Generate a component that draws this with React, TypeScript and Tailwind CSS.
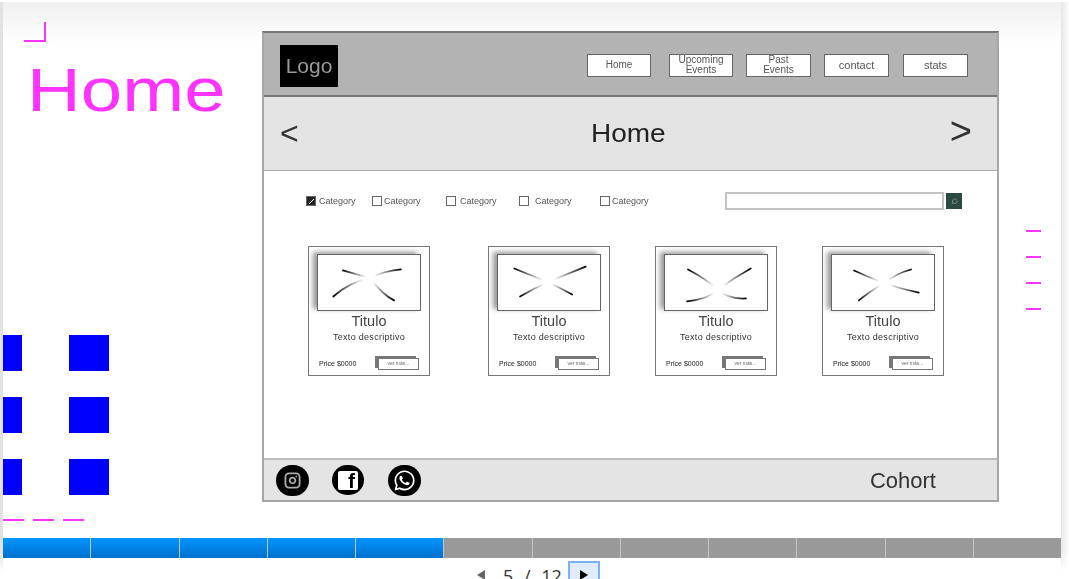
import { FaWhatsapp } from "react-icons/fa"
import { Instagram, Search } from "lucide-react"

const sans = "font-['Liberation_Sans',Arial,sans-serif]"

const navItems = [
  { label: "Home", className: "w-[64px]" },
  { label: "Upcoming Events", className: "w-[64px] ml-[18px]" },
  { label: "Past Events", className: "w-[65px] ml-[13px]" },
  { label: "contact", className: "w-[65px] ml-[13px] text-[11px]" },
  { label: "stats", className: "w-[65px] ml-[14px] text-[11px]" },
]

const categories = [
  { checked: true, className: "w-[66px] gap-[3px]" },
  { checked: false, className: "w-[74px] gap-[2px]" },
  { checked: false, className: "w-[73px] gap-[4px]" },
  { checked: false, className: "w-[81px] gap-[6px]" },
  { checked: false, className: "w-[125px] gap-[2px]" },
]

// each card's placeholder has slightly different arms: [x, y, controlX, controlY]
const cards = [
  {
    className: "",
    center: [53, 24],
    arms: [[25, 16, 39, 20], [85, 15, 66, 17], [15, 43, 32, 28], [78, 47, 67, 42]],
  },
  {
    className: "ml-[58px]",
    center: [51, 28],
    arms: [[16, 14, 33, 21], [90, 12, 70, 20], [22, 43, 36, 35], [76, 41, 63, 34]],
  },
  {
    className: "ml-[45px]",
    center: [54, 36],
    arms: [[23, 15, 42, 25], [88, 14, 70, 24], [22, 48, 44, 46], [83, 45, 64, 46]],
  },
  {
    className: "ml-[45px]",
    center: [53, 29],
    arms: [[22, 16, 37, 23], [81, 15, 66, 19], [27, 47, 38, 38], [89, 39, 70, 35]],
  },
]

function Placeholder({ id, center, arms }: { id: number; center: number[]; arms: number[][] }) {
  return (
    <svg viewBox="0 0 104 57" className="w-full h-full">
      <defs>
        {arms.map((a, i) => (
          <linearGradient
            key={i}
            id={`arm-${id}-${i}`}
            gradientUnits="userSpaceOnUse"
            x1={a[0]}
            y1={a[1]}
            x2={center[0]}
            y2={center[1]}
          >
            <stop offset="0" stopColor="#000" />
            <stop offset="0.85" stopColor="#fff" />
          </linearGradient>
        ))}
      </defs>
      {arms.map((a, i) => (
        <path
          key={i}
          d={`M${a[0]} ${a[1]}Q${a[2]} ${a[3]} ${center[0]} ${center[1]}`}
          fill="none"
          stroke={`url(#arm-${id}-${i})`}
          strokeWidth="1.8"
          strokeLinecap="round"
        />
      ))}
    </svg>
  )
}

function Card({ id, className, center, arms }: { id: number; className: string; center: number[]; arms: number[][] }) {
  return (
    <div className={`w-[122px] h-[130px] border border-[#777] bg-white flex flex-col ${className}`}>
      <div className="ml-[8px] mt-[7px] w-[104px] h-[57px] shrink-0 border border-[#666] bg-white shadow-[-4px_-2px_5px_#999]">
        <Placeholder id={id} center={center} arms={arms} />
      </div>
      <div className="mt-[2px] text-center text-[14.5px] leading-[16px] text-[#444]">Titulo</div>
      <div className="mt-[1px] text-center text-[9px] leading-[14px] tracking-[0.3px] text-[#333]">Texto descriptivo</div>
      <div className="mt-auto mb-[5px] flex items-center justify-between pl-[10px] pr-[10px]">
        <span className="text-[7px] text-[#222]">Price $0000</span>
        <div className="w-[41px] h-[12px] border border-[#777] bg-white shadow-[-3px_-2px_0_#777] flex items-center justify-center text-[5px] text-[#666]">
          ver más...
        </div>
      </div>
    </div>
  )
}

function Wireframe() {
  return (
    <div className={`w-[737px] h-[471px] border-2 border-[#a6a6a6] border-t-[#777] bg-white flex flex-col blur-[0.7px] ${sans}`}>
      <div className="h-[64px] shrink-0 bg-[#b3b3b3] border-b-2 border-[#777] flex items-center pl-[16px] pr-[29px]">
        <div className="mt-[4px] w-[58px] h-[42px] bg-black text-[#999] text-[21px] flex items-center justify-center">Logo</div>
        <div className="ml-auto mt-[2px] flex">
          {navItems.map((item) => (
            <div
              key={item.label}
              className={`h-[23px] border border-[#666] bg-white flex items-center justify-center text-center text-[10px] leading-[10px] text-[#555] ${item.className}`}
            >
              {item.label === "Home" || item.label === "contact" || item.label === "stats" ? (
                item.label
              ) : (
                <span className="w-[50px]">{item.label}</span>
              )}
            </div>
          ))}
        </div>
      </div>

      <div className="h-[74px] shrink-0 bg-[#e4e4e4] border-b border-[#aaa] flex items-center justify-between pl-[16px] pr-[25px] text-[#333]">
        <span className="text-[32px] leading-none mt-[-2px]">&lt;</span>
        <span className="block text-[25px] text-[#222] scale-x-[1.12] ml-[8px]">Home</span>
        <span className="text-[38px] leading-none mt-[-6px]">&gt;</span>
      </div>

      <div className="flex items-center pl-[42px] pt-[21px]">
        {categories.map((c, i) => (
          <div key={i} className={`flex items-center ${c.className}`}>
            <span className={`w-[10px] h-[10px] border border-[#666] flex items-end ${c.checked ? "bg-[#222]" : "bg-white"}`}>
              {c.checked && (
                <svg viewBox="0 0 8 8" className="w-full h-full">
                  <path d="M2 7L7 2" stroke="#fff" strokeWidth="1" />
                </svg>
              )}
            </span>
            <span className="text-[9px] leading-none text-[#555]">Category</span>
          </div>
        ))}
        <div className="w-[219px] h-[18px] border-2 border-[#c4c4c4] bg-white" />
        <div className="ml-[2px] w-[16px] h-[16px] bg-[#2c4a44] flex items-center justify-center text-[#9aa]">
          <Search size={7} className="-scale-x-100" />
        </div>
      </div>

      <div className="flex pl-[44px] mt-[36px]">
        {cards.map((c, i) => (
          <Card key={i} id={i} className={c.className} center={c.center} arms={c.arms} />
        ))}
      </div>

      <div className="mt-auto h-[42px] shrink-0 bg-[#e4e4e4] border-t-2 border-[#bbb] flex items-center pl-[12px] pr-[61px]">
        <div className="w-[33px] h-[31px] rounded-full bg-black text-[#aaa] flex items-center justify-center">
          <Instagram size={17} strokeWidth={2.6} />
        </div>
        <div className="ml-[23px] w-[32px] h-[30px] rounded-full bg-black flex items-center justify-center">
          <div className="w-[20px] h-[19px] bg-white rounded-[2px] overflow-hidden flex items-end justify-end pr-[3px]">
            <span className="text-[21px] leading-[18px] font-bold text-black">f</span>
          </div>
        </div>
        <div className="ml-[24px] w-[33px] h-[31px] rounded-full bg-black text-white flex items-center justify-center">
          <FaWhatsapp size={23} />
        </div>
        <span className="ml-auto text-[22px] text-[#333]">Cohort</span>
      </div>
    </div>
  )
}

export default function App() {
  return (
    <div className={`w-[1069px] h-[579px] overflow-hidden bg-white pt-[2px] flex ${sans}`}>
      <div className="w-[3px] h-[570px] shrink-0 bg-linear-to-b from-[#e2e2e2] from-[96%] to-white" />
      <div className="w-[1058px] shrink-0 flex flex-col">
        <div className="h-[536px] shrink-0 flex bg-linear-to-b from-[#f0f0f0] to-white to-[8%]">
          <div className="w-[259px] shrink-0 flex flex-col">
            <div className="ml-[21px] mt-[20px] w-[22px] h-[20px] border-r-2 border-b-2 border-[#ff33ff]" />
            <div className="mt-[18px] ml-[24px] text-[61px] leading-[61px] text-[#ff33ff] origin-left scale-x-[1.22] blur-[0.3px]">
              Home
            </div>
            <div className="mt-[214px] grid grid-cols-[19px_40px] grid-rows-[36px_36px_36px] gap-x-[47px] gap-y-[26px] blur-[0.4px]">
              {[0, 1, 2, 3, 4, 5].map((n) => (
                <div key={n} className="bg-[#0000ff]" />
              ))}
            </div>
            <div className="mt-[24px] flex gap-[9px]">
              {[0, 1, 2].map((n) => (
                <div key={n} className="w-[21px] h-[2px] bg-[#ff33ff]" />
              ))}
            </div>
          </div>
          <div className="mt-[29px] shrink-0 self-start">
            <Wireframe />
          </div>
          <div className="ml-[27px] mt-[228px] flex flex-col gap-[24px]">
            {[0, 1, 2, 3].map((n) => (
              <div key={n} className="w-[15px] h-[2px] bg-[#ff33ff]" />
            ))}
          </div>
        </div>

        <div className="h-[20px] shrink-0 flex">
          {Array.from({ length: 12 }).map((_, i) => (
            <div
              key={i}
              className={`flex-1 border-l border-[#c4c4c4] first:border-l-0 ${
                i < 5 ? "bg-linear-to-b from-[#0096ff] to-[#0070cc] border-[#4aa8ee]" : "bg-[#999]"
              }`}
            />
          ))}
        </div>

        <div className="flex items-start justify-center pt-[3px] pl-[13px]">
          <span className="mt-[9px] w-0 h-0 border-y-[5px] border-y-transparent border-r-[8px] border-r-[#666]" />
          <span className="ml-[18px] mt-[3px] font-['Open_Sans',sans-serif] text-[18px] leading-[24px] text-[#333] [word-spacing:6px]">5 / 12</span>
          <div className="ml-[6px] w-[32px] h-[24px] border-2 border-[#7eb0f8] bg-[#e0ebff] flex items-start justify-center pt-[7px]">
            <span className="w-0 h-0 border-y-[5px] border-y-transparent border-l-[8px] border-l-black" />
          </div>
        </div>
      </div>
      <div className="w-[8px] h-[570px] shrink-0 bg-linear-to-r from-[#e6e6e6] to-[#fdfdfd] [mask-image:linear-gradient(to_bottom,#000_96%,transparent)]" />
    </div>
  )
}
